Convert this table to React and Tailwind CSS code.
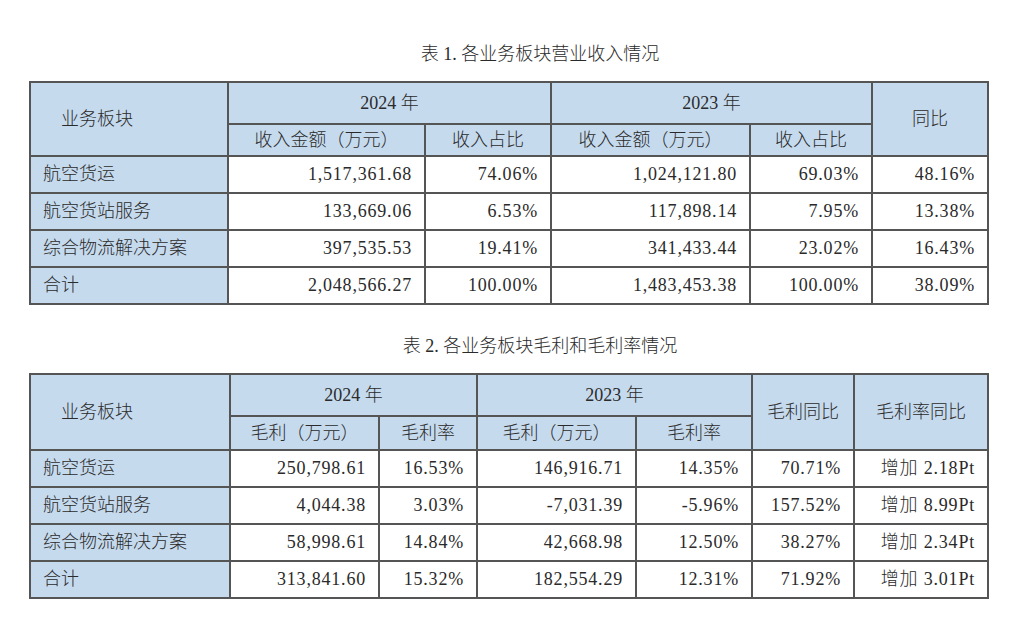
const revenueRows = [
  ['航空货运', '1,517,361.68', '74.06%', '1,024,121.80', '69.03%', '48.16%'],
  ['航空货站服务', '133,669.06', '6.53%', '117,898.14', '7.95%', '13.38%'],
  ['综合物流解决方案', '397,535.53', '19.41%', '341,433.44', '23.02%', '16.43%'],
  ['合计', '2,048,566.27', '100.00%', '1,483,453.38', '100.00%', '38.09%'],
];

const profitRows = [
  ['航空货运', '250,798.61', '16.53%', '146,916.71', '14.35%', '70.71%', '增加 2.18Pt'],
  ['航空货站服务', '4,044.38', '3.03%', '-7,031.39', '-5.96%', '157.52%', '增加 8.99Pt'],
  ['综合物流解决方案', '58,998.61', '14.84%', '42,668.98', '12.50%', '38.27%', '增加 2.34Pt'],
  ['合计', '313,841.60', '15.32%', '182,554.29', '12.31%', '71.92%', '增加 3.01Pt'],
];

const cell = 'border-2 border-[#555] p-0';
const head = `${cell} bg-[#c6daee] text-center font-light`;

function Title({ children }) {
  return (
    <div className="ml-[29px] w-[958px] pl-[64px] text-center text-[18px] leading-[24px]">
      {children}
    </div>
  );
}

function DataRow({ row }) {
  return (
    <tr className="h-[37px]">
      <td className={`${cell} bg-[#c6daee] pl-3 text-left`}>{row[0]}</td>
      {row.slice(1).map((v, i) => (
        <td key={i} className={`${cell} bg-white pr-3 text-right tracking-[0.8px]`}>
          {v}
        </td>
      ))}
    </tr>
  );
}

export default function App() {
  return (
    <div
      className="min-h-screen overflow-hidden bg-white pt-[42px] font-light text-[#2a2a2a]"
      style={{ fontFamily: '"Liberation Serif", "Noto Sans CJK SC", serif' }}
    >
      <Title>表 1. 各业务板块营业收入情况</Title>

      <table className="mt-[15px] ml-[29px] w-[958px] table-fixed border-collapse text-[18px]">
        <colgroup>
          <col className="w-[198px]" />
          <col className="w-[197px]" />
          <col className="w-[126px]" />
          <col className="w-[199px]" />
          <col className="w-[122px]" />
          <col className="w-[116px]" />
        </colgroup>
        <thead>
          <tr className="h-[42px]">
            <th rowSpan={2} className={`${cell} bg-[#c6daee] pl-[30px] text-left font-light`}>
              业务板块
            </th>
            <th colSpan={2} className={head}>2024 年</th>
            <th colSpan={2} className={head}>2023 年</th>
            <th rowSpan={2} className={head}>同比</th>
          </tr>
          <tr className="h-[32px]">
            <th className={head}>收入金额（万元）</th>
            <th className={head}>收入占比</th>
            <th className={head}>收入金额（万元）</th>
            <th className={head}>收入占比</th>
          </tr>
        </thead>
        <tbody>
          {revenueRows.map((row) => (
            <DataRow key={row[0]} row={row} />
          ))}
        </tbody>
      </table>

      <div className="mt-[29px]">
        <Title>表 2. 各业务板块毛利和毛利率情况</Title>
      </div>

      <table className="mt-[15px] ml-[29px] w-[958px] table-fixed border-collapse text-[18px]">
        <colgroup>
          <col className="w-[200px]" />
          <col className="w-[149px]" />
          <col className="w-[98px]" />
          <col className="w-[159px]" />
          <col className="w-[116px]" />
          <col className="w-[102px]" />
          <col className="w-[134px]" />
        </colgroup>
        <thead>
          <tr className="h-[42px]">
            <th rowSpan={2} className={`${cell} bg-[#c6daee] pl-[30px] text-left font-light`}>
              业务板块
            </th>
            <th colSpan={2} className={head}>2024 年</th>
            <th colSpan={2} className={head}>2023 年</th>
            <th rowSpan={2} className={head}>毛利同比</th>
            <th rowSpan={2} className={head}>毛利率同比</th>
          </tr>
          <tr className="h-[34px]">
            <th className={head}>毛利（万元）</th>
            <th className={head}>毛利率</th>
            <th className={head}>毛利（万元）</th>
            <th className={head}>毛利率</th>
          </tr>
        </thead>
        <tbody>
          {profitRows.map((row) => (
            <DataRow key={row[0]} row={row} />
          ))}
        </tbody>
      </table>

      <p className="mt-[20px] pl-[100px] text-[18px] leading-[24px]">航空货运业务板块</p>
    </div>
  );
}
